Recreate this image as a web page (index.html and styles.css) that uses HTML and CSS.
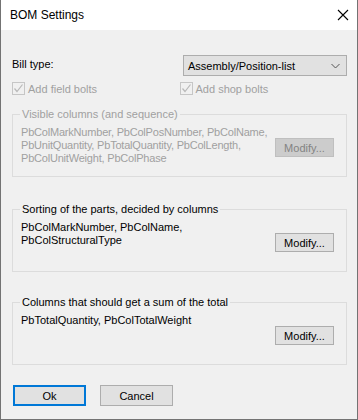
FILE: index.html
```html
<!DOCTYPE html>
<html lang="en">
<head>
<meta charset="UTF-8">
<title>BOM Settings</title>
<link rel="stylesheet" href="styles.css">
</head>
<body>

<div class="window">
  <div class="titlebar">
    <span class="title">BOM Settings</span>
    <svg class="close" width="12" height="12" viewBox="0 0 12 12">
      <path d="M1 1 L11 11 M11 1 L1 11" stroke="#000" stroke-width="1.1" fill="none"/>
    </svg>
  </div>

  <div class="content">
    <div class="bill-row">
      <span class="label">Bill type:</span>
      <div class="select">
        <span>Assembly/Position-list</span>
        <svg width="9" height="6" viewBox="0 0 9 6">
          <path d="M0.5 1 L4.5 5 L8.5 1" stroke="#555" stroke-width="1" fill="none"/>
        </svg>
      </div>
    </div>

    <div class="check-row">
      <label class="check disabled">
        <span class="box">
          <svg width="11" height="11" viewBox="0 0 11 11">
            <path d="M1.5 5.5 L4 8.5 L9.5 1.5" stroke="#b8b8b8" stroke-width="1.2" fill="none"/>
          </svg>
        </span>
        Add field bolts
      </label>
      <label class="check disabled shop">
        <span class="box">
          <svg width="11" height="11" viewBox="0 0 11 11">
            <path d="M1.5 5.5 L4 8.5 L9.5 1.5" stroke="#b8b8b8" stroke-width="1.2" fill="none"/>
          </svg>
        </span>
        Add shop bolts
      </label>
    </div>

    <fieldset class="group group-visible disabled">
      <legend>Visible columns (and sequence)</legend>
      <div class="group-body">
        <div class="cols tight">PbColMarkNumber, PbColPosNumber, PbColName,<br>PbUnitQuantity, PbTotalQuantity, PbColLength,<br>PbColUnitWeight, PbColPhase</div>
        <button class="btn modify" disabled>Modify...</button>
      </div>
    </fieldset>

    <fieldset class="group group-sort">
      <legend>Sorting of the parts, decided by columns</legend>
      <div class="group-body">
        <div class="cols">PbColMarkNumber, PbColName,<br>PbColStructuralType</div>
        <button class="btn modify">Modify...</button>
      </div>
    </fieldset>

    <fieldset class="group group-sum">
      <legend>Columns that should get a sum of the total</legend>
      <div class="group-body">
        <div class="cols">PbTotalQuantity, PbColTotalWeight</div>
        <button class="btn modify">Modify...</button>
      </div>
    </fieldset>

    <div class="actions">
      <button class="btn dlg default">Ok</button>
      <button class="btn dlg">Cancel</button>
    </div>
  </div>
</div>

</body>
</html>
```

FILE: styles.css
```css
body {
  margin: 0;
  font-family: "Liberation Sans", Arial, sans-serif;
  font-size: 11px;
  color: #000;
  background: #f0f0f0;
}
.window {
  width: 358px;
  height: 420px;
  box-sizing: border-box;
  border: 1px solid #737373;
  border-top: none;
  background: #f0f0f0;
}
.titlebar {
  height: 30px;
  background: #fff;
  display: flex;
  align-items: center;
  justify-content: space-between;
  padding: 0 8px 0 9px;
}
.title {
  font-size: 12px;
}
.content {
  padding: 25px 10px 0 11px;
}
.bill-row {
  display: flex;
  justify-content: space-between;
  align-items: flex-start;
  height: 21px;
}
.label {
  margin-top: 3px;
}
.select {
  width: 164px;
  height: 21px;
  box-sizing: border-box;
  border: 1px solid #adadad;
  background: #e1e1e1;
  display: flex;
  align-items: center;
  justify-content: space-between;
  padding: 0 6px 0 4px;
}
.check-row {
  display: flex;
  margin-top: 6px;
  height: 13px;
}
.check {
  display: flex;
  align-items: center;
  gap: 3px;
  width: 169px;
}
.check.disabled {
  color: #a0a0a0;
}
.box {
  width: 13px;
  height: 13px;
  box-sizing: border-box;
  border: 1px solid #c6c6c6;
  background: #f0f0f0;
  display: flex;
  align-items: center;
  justify-content: center;
}
.group {
  margin: 12px 0 0;
  padding: 5px 12px 0 7px;
  border: 1px solid #dcdcdc;
  height: 70px;
  box-sizing: border-box;
}
.group legend {
  padding: 0 2px;
  line-height: 14px;
}
.group-sort {
  margin-top: 25px;
}
.group-sum {
  margin-top: 23px;
}
.group-body {
  display: flex;
  justify-content: space-between;
  align-items: flex-start;
  padding-left: 1px;
}
.cols {
  line-height: 13px;
  white-space: nowrap;
}
.cols.tight {
  letter-spacing: -0.2px;
}
.disabled legend,
.disabled .cols {
  color: #a0a0a0;
}
.btn {
  font-family: inherit;
  font-size: 11px;
  color: #000;
  background: #e1e1e1;
  border: 1px solid #adadad;
  padding: 0;
  margin: 0;
}
.modify {
  width: 59px;
  height: 19px;
  margin-top: 12px;
  flex-shrink: 0;
}
.modify:disabled {
  background: #cccccc;
  border-color: #bfbfbf;
  color: #838383;
}
.actions {
  display: flex;
  gap: 14px;
  margin-top: 20px;
  padding-left: 1px;
}
.dlg {
  width: 73px;
  height: 21px;
}
.dlg.default {
  border: 2px solid #0078d7;
}
```
